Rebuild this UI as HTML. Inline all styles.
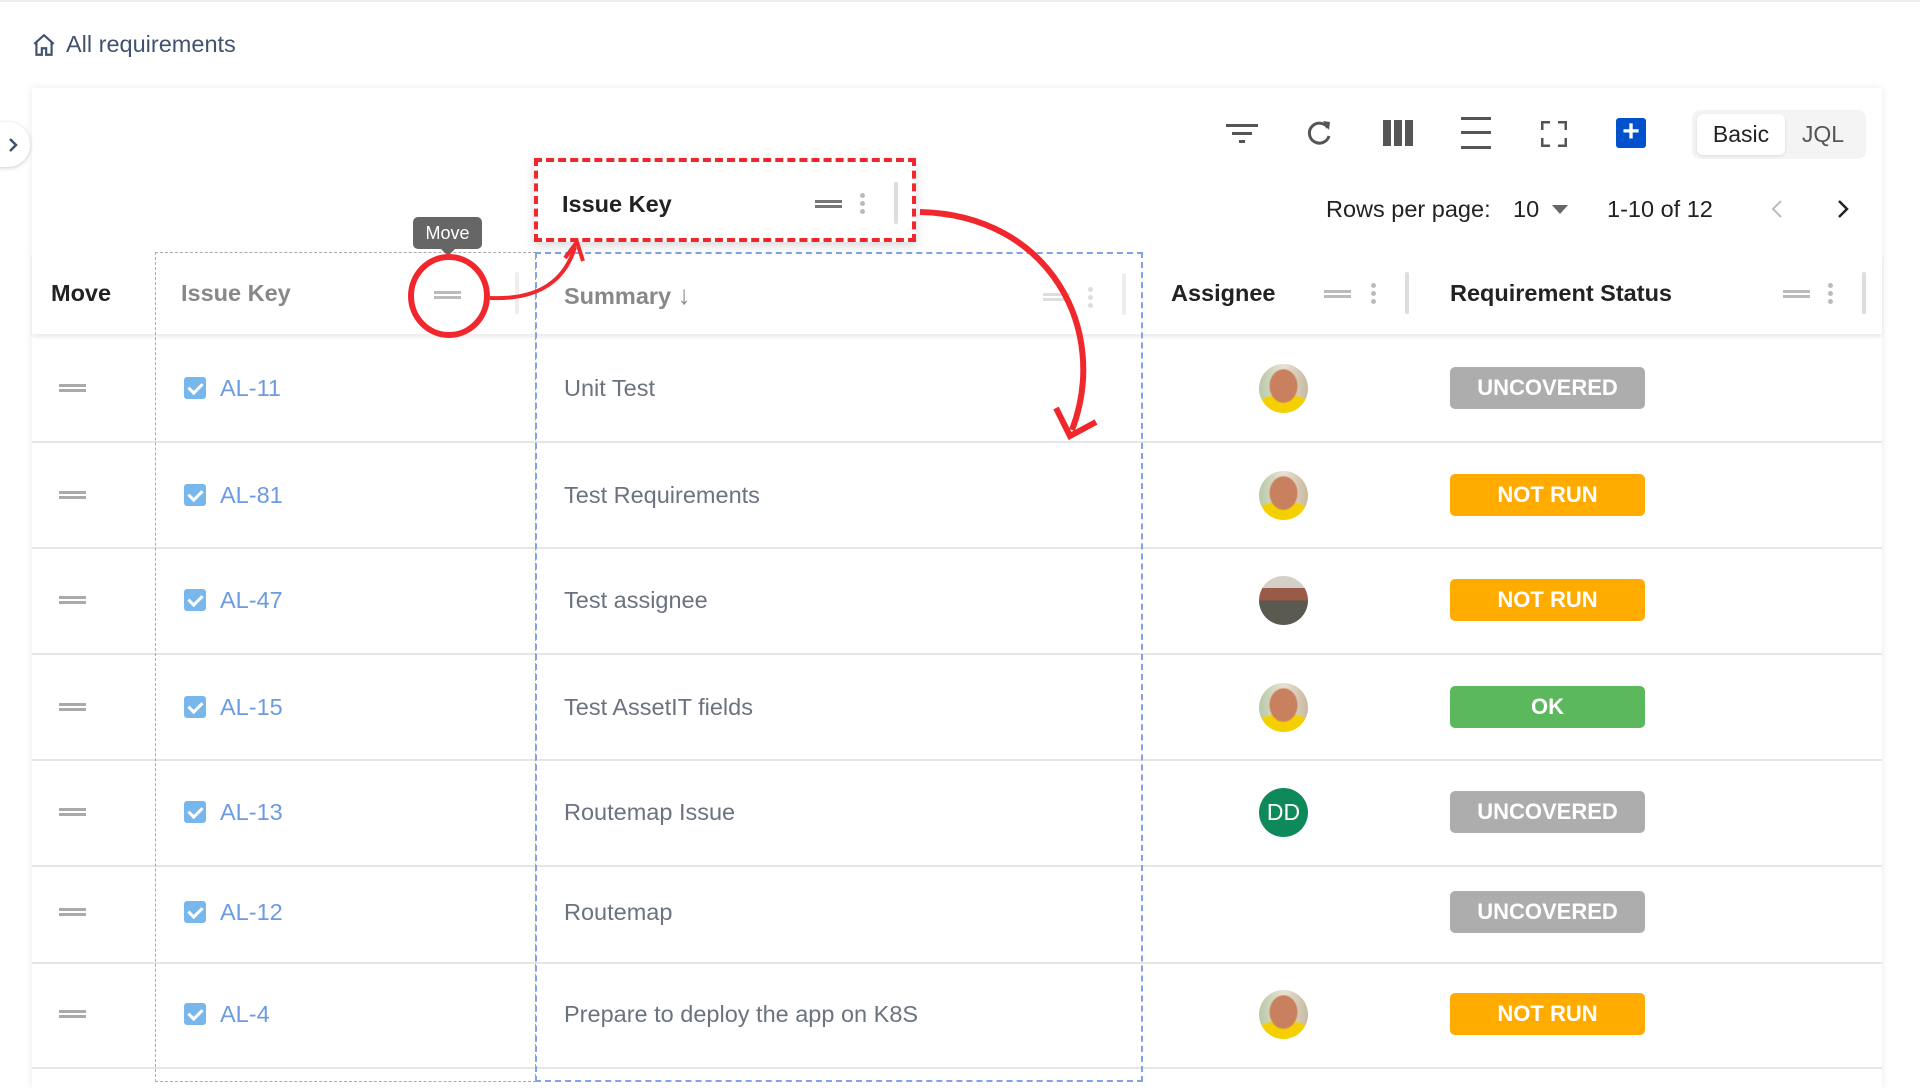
<!DOCTYPE html>
<html><head><meta charset="utf-8"><style>
*{margin:0;padding:0;box-sizing:border-box}
body{width:1920px;height:1070px;overflow:hidden;background:#fff;font-family:"Liberation Sans",sans-serif;position:relative;color:#172b4d}
.a{position:absolute}
.card{left:32px;top:88px;width:1850px;height:1000px;background:#fff;box-shadow:0 0 8px rgba(0,0,0,.08)}
.hdr{left:32px;top:252px;width:1850px;height:82px;box-shadow:0 3px 4px rgba(0,0,0,.08);background:#fff}
.th{font-size:23.5px;font-weight:bold;color:#222;top:280px}
.row{left:32px;width:1850px;height:2px;background:#e6e6e6}
.drag{width:27px;height:8px;border-top:3px solid #aaa;border-bottom:3px solid #aaa}
.cb{width:22px;height:22px;background:#78b7ec;border-radius:3px;left:184px}
.cb:after{content:"";position:absolute;left:7px;top:3px;width:6px;height:11px;border:solid #fff;border-width:0 3px 3px 0;transform:rotate(45deg)}
.key{left:220px;font-size:23.5px;color:#6b9be0}
.sum{left:564px;font-size:23.5px;color:#6b7380}
.av{left:1259px;width:49px;height:49px;border-radius:50%;background:radial-gradient(ellipse 30% 36% at 50% 45%,#c9805e 0 90%,transparent 100%),radial-gradient(ellipse 70% 40% at 50% 100%,#f4d000 0 90%,transparent 100%),linear-gradient(90deg,#b7c9a8,#e8e2d4 50%,#c8b8a0)}
.bd{left:1450px;width:195px;height:42px;border-radius:5px;color:#fff;font-weight:bold;font-size:22px;text-align:center;line-height:42px}
.g{background:#adadad}.o{background:#ffab00}.gr{background:#5cb85c}
.dots{width:5px}
.dots i{display:block;width:5px;height:5px;border-radius:50%;background:#bbb;margin-bottom:3px}
.sep{width:4px;height:42px;background:#ddd;border-radius:2px}
</style></head><body>
<div class="a" style="left:0;top:0;width:1920px;height:2px;background:#eee"></div>
<svg class="a" style="left:31px;top:32px" width="26" height="26" viewBox="0 0 24 24" fill="none" stroke="#42526e" stroke-width="2"><path d="M3 11L12 3l9 8M5 9v12h5v-6h4v6h5V9"/></svg>
<div class="a" style="left:66px;top:31px;font-size:23.5px;color:#42526e">All requirements</div>
<div class="a card"></div>
<div class="a" style="left:-10px;top:122px;width:40px;height:45px;background:#fff;border-radius:0 22px 22px 0;box-shadow:0 1px 4px rgba(0,0,0,.2)"></div>
<svg class="a" style="left:6px;top:136px" width="14" height="18" viewBox="0 0 14 18"><path d="M4 3l6 6-6 6" stroke="#42526e" stroke-width="2.5" fill="none"/></svg>
<svg class="a" style="left:1226px;top:120px" width="32" height="28" viewBox="0 0 32 28" fill="#555"><rect x="0" y="4" width="32" height="3"/><rect x="6" y="12" width="20" height="3"/><rect x="13" y="20" width="6" height="3"/></svg>
<svg class="a" style="left:1304px;top:118px" width="30" height="30" viewBox="0 0 30 30"><path d="M24 10A10 10 0 1 0 25 18" stroke="#555" stroke-width="3" fill="none"/><path d="M19 3l7 1-1 8z" fill="#555"/></svg>
<svg class="a" style="left:1383px;top:120px" width="30" height="26"><rect x="0" y="0" width="8" height="26" fill="#555"/><rect x="11" y="0" width="8" height="26" fill="#555"/><rect x="22" y="0" width="8" height="26" fill="#555"/></svg>
<svg class="a" style="left:1461px;top:117px" width="30" height="32" fill="#555"><rect y="0" width="30" height="3"/><rect y="14" width="30" height="3"/><rect y="29" width="30" height="3"/></svg>
<svg class="a" style="left:1541px;top:121px" width="26" height="26" fill="none" stroke="#555" stroke-width="3"><path d="M1 9V1h8M17 1h8v8M25 17v8h-8M9 25H1v-8"/></svg>
<div class="a" style="left:1616px;top:118px;width:30px;height:30px;background:#0052cc;border-radius:3px;color:#fff;font-size:30px;font-weight:bold;line-height:28px;text-align:center">+</div>
<div class="a" style="left:1692px;top:110px;width:174px;height:49px;background:#f4f4f4;border-radius:8px"></div>
<div class="a" style="left:1697px;top:114px;width:88px;height:41px;background:#fff;border-radius:6px;box-shadow:0 1px 3px rgba(0,0,0,.1);font-size:23px;color:#222;text-align:center;line-height:41px">Basic</div>
<div class="a" style="left:1785px;top:114px;width:76px;font-size:23px;color:#555;text-align:center;line-height:41px">JQL</div>
<div class="a" style="left:1326px;top:196px;font-size:23.5px;color:#222">Rows per page:</div>
<div class="a" style="left:1513px;top:196px;font-size:23.5px;color:#222">10</div>
<svg class="a" style="left:1552px;top:205px" width="16" height="10"><path d="M0 0h16L8 9z" fill="#666"/></svg>
<div class="a" style="left:1607px;top:196px;font-size:23.5px;color:#222">1-10 of 12</div>
<svg class="a" style="left:1770px;top:198px" width="14" height="22"><path d="M11 3L3 11l8 8" stroke="#bbb" stroke-width="2" fill="none"/></svg>
<svg class="a" style="left:1836px;top:198px" width="14" height="22"><path d="M3 3l8 8-8 8" stroke="#222" stroke-width="2.5" fill="none"/></svg>
<div class="a hdr"></div>
<div class="a th" style="left:51px">Move</div>
<div class="a th" style="left:181px;color:#888">Issue Key</div>
<div class="a drag" style="left:434px;top:291px;border-color:#bbb"></div>
<div class="a sep" style="left:515px;top:272px;background:#eee"></div>
<div class="a th" style="left:564px;color:#888">Summary <span style="font-weight:normal;font-size:26px">↓</span></div>
<div class="a drag" style="left:1043px;top:293px;border-color:#ddd"></div>
<div class="a dots" style="left:1088px;top:287px"><i style="background:#ddd"></i><i style="background:#ddd"></i><i style="background:#ddd"></i></div>
<div class="a sep" style="left:1122px;top:273px;background:#eee"></div>
<div class="a th" style="left:1171px">Assignee</div>
<div class="a drag" style="left:1324px;top:290px;border-color:#bbb"></div>
<div class="a dots" style="left:1371px;top:283px"><i></i><i></i><i></i></div>
<div class="a sep" style="left:1405px;top:272px"></div>
<div class="a th" style="left:1450px">Requirement Status</div>
<div class="a drag" style="left:1783px;top:290px;border-color:#bbb"></div>
<div class="a dots" style="left:1828px;top:283px"><i></i><i></i><i></i></div>
<div class="a sep" style="left:1862px;top:272px"></div>
<div class="a row" style="top:441px"></div><div class="a row" style="top:547px"></div><div class="a row" style="top:653px"></div><div class="a row" style="top:759px"></div><div class="a row" style="top:865px"></div><div class="a row" style="top:962px"></div><div class="a row" style="top:1067px"></div>

<div class="a drag" style="left:59px;top:384px"></div><div class="a cb" style="top:377px"></div><div class="a key" style="top:375px">AL-11</div><div class="a sum" style="top:375px">Unit Test</div><div class="a av" style="top:364px"></div><div class="a bd g" style="top:367px">UNCOVERED</div>
<div class="a drag" style="left:59px;top:491px"></div><div class="a cb" style="top:484px"></div><div class="a key" style="top:482px">AL-81</div><div class="a sum" style="top:482px">Test Requirements</div><div class="a av" style="top:471px"></div><div class="a bd o" style="top:474px">NOT RUN</div>
<div class="a drag" style="left:59px;top:596px"></div><div class="a cb" style="top:589px"></div><div class="a key" style="top:587px">AL-47</div><div class="a sum" style="top:587px">Test assignee</div><div class="a av" style="top:576px;background:linear-gradient(#d4d0c8 0 25%,#9a5a48 25% 50%,#5a5a50 50%)"></div><div class="a bd o" style="top:579px">NOT RUN</div>
<div class="a drag" style="left:59px;top:703px"></div><div class="a cb" style="top:696px"></div><div class="a key" style="top:694px">AL-15</div><div class="a sum" style="top:694px">Test AssetIT fields</div><div class="a av" style="top:683px"></div><div class="a bd gr" style="top:686px">OK</div>
<div class="a drag" style="left:59px;top:808px"></div><div class="a cb" style="top:801px"></div><div class="a key" style="top:799px">AL-13</div><div class="a sum" style="top:799px">Routemap Issue</div><div class="a av" style="top:788px;background:#0e8a5a;color:#fff;font-size:23px;text-align:center;line-height:49px">DD</div><div class="a bd g" style="top:791px">UNCOVERED</div>
<div class="a drag" style="left:59px;top:908px"></div><div class="a cb" style="top:901px"></div><div class="a key" style="top:899px">AL-12</div><div class="a sum" style="top:899px">Routemap</div><div class="a bd g" style="top:891px">UNCOVERED</div>
<div class="a drag" style="left:59px;top:1010px"></div><div class="a cb" style="top:1003px"></div><div class="a key" style="top:1001px">AL-4</div><div class="a sum" style="top:1001px">Prepare to deploy the app on K8S</div><div class="a av" style="top:990px"></div><div class="a bd o" style="top:993px">NOT RUN</div>

<div class="a" style="left:155px;top:252px;width:381px;height:830px;border:1.5px dashed #aaa"></div>
<div class="a" style="left:535px;top:252px;width:608px;height:830px;border:2.5px dashed #7fa3e6"></div>
<div class="a" style="left:534px;top:158px;width:382px;height:84px;background:#fff;border:4px dashed #f0282d;box-shadow:0 4px 10px rgba(0,0,0,.15)"></div>
<div class="a" style="left:562px;top:191px;font-size:23.5px;font-weight:bold;color:#222">Issue Key</div>
<div class="a drag" style="left:815px;top:200px;width:27px;border-color:#777"></div>
<div class="a dots" style="left:860px;top:193px"><i></i><i></i><i></i></div>
<div class="a sep" style="left:894px;top:182px;background:#ddd"></div>
<div class="a" style="left:413px;top:217px;width:69px;height:32px;background:#666;border-radius:5px;color:#fff;font-size:18px;text-align:center;line-height:32px">Move</div>
<svg class="a" style="left:0;top:0" width="1920" height="1070">
<path d="M441 249l7 7 7-7z" fill="#666"/>
<ellipse cx="449" cy="296" rx="38" ry="39" fill="none" stroke="#f0282d" stroke-width="6"/>
<path d="M490 298C540 300 565 280 575 247" fill="none" stroke="#f0282d" stroke-width="4"/>
<path d="M565 258l12-16 6 19" fill="none" stroke="#f0282d" stroke-width="4"/>
<path d="M920 212C1050 215 1110 330 1072 430" fill="none" stroke="#f0282d" stroke-width="6"/>
<path d="M1056 408l14 28 26-14" fill="none" stroke="#f0282d" stroke-width="6"/>
</svg>
</body></html>
